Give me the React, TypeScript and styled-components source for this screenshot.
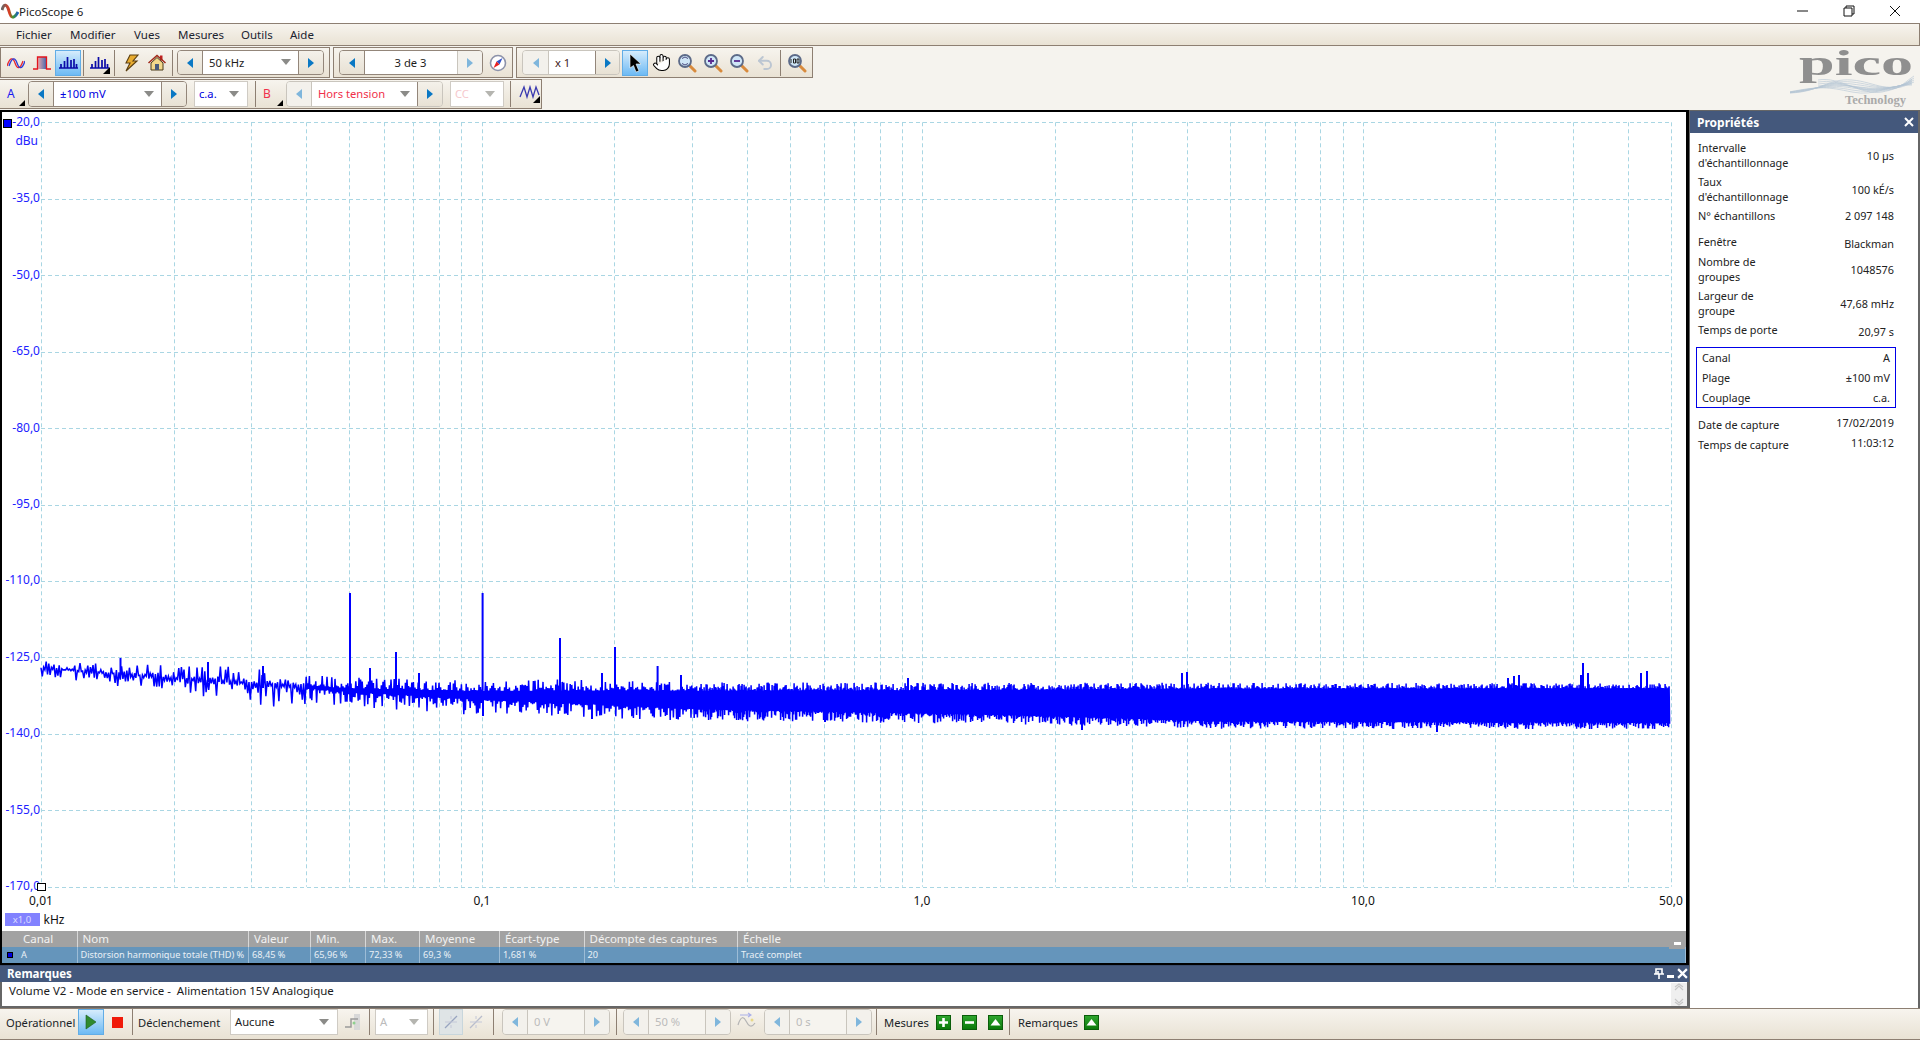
import React from "react";
import styled, { createGlobalStyle } from "styled-components";
import { Hand, Undo2 } from "lucide-react";

const Global = createGlobalStyle`
  html, body { margin: 0; padding: 0; width: 1920px; height: 1040px; overflow: hidden; background: #f5f3ee; }
  body { font-family: "Noto Sans", "Liberation Sans", sans-serif; font-size: 11px; color: #1c1c1c; }
  * { box-sizing: border-box; }
`;

const Page = styled.div`
  width: 1920px; height: 1040px; display: flex; flex-direction: column; background: #f5f3ee;
`;
const TitleBar = styled.div`
  height: 23px; background: #fff; display: flex; align-items: center; padding: 0 2px 0 1px; flex: none;
`;
const TitleText = styled.span`
  font-size: 11.5px; flex: 1; color: #222;
`;
const WinButton = styled.div`
  width: 46px; height: 23px; display: flex; align-items: center; justify-content: center; padding-bottom: 2px;
`;
const MenuBar = styled.div`
  height: 23px; flex: none; display: flex; align-items: center; padding-left: 16px;
  border: 1px solid #8d7f72; border-width: 1px 1px 1px 0;
  background-image: linear-gradient(180deg, #f7f4ee 0%, #e9e2d4 100%);
`;
const MenuItem = styled.span<{ $w: number }>`
  width: ${p => p.$w}px; font-size: 11.5px; color: #1b2330;
`;
const ToolArea = styled.div`
  height: 64px; flex: none; display: flex; justify-content: space-between; background: #f5f3ee;
`;
const ToolRows = styled.div`
  display: flex; flex-direction: column; padding-top: 1px; gap: 1px;
`;
const ToolRow = styled.div`
  display: flex; gap: 3px;
`;
const Group = styled.div<{ $w: number; $h: number }>`
  width: ${p => p.$w}px; height: ${p => p.$h}px; flex: none; display: flex; align-items: center;
  border: 1px solid #8d7f72; border-left-width: ${p => (p.$w > 400 ? 0 : 1)}px;
  background: linear-gradient(180deg, #f7f4ee 0%, #e9e2d4 100%);
`;
const ToolBtn = styled.div<{ $on?: boolean; $ml?: number }>`
  width: 26px; height: 26px; flex: none; display: flex; align-items: center; justify-content: center;
  margin-left: ${p => p.$ml ?? 0}px;
  ${p => p.$on ? `border: 1px solid #62ade6; background: linear-gradient(180deg, #d6ecfc 0%, #6dbaf4 100%);` : ""}
`;
const Sep = styled.div<{ $m?: number; $h?: number }>`
  width: 1px; height: ${p => p.$h ?? 26}px; background: #8d7f72; flex: none; margin: 0 ${p => p.$m ?? 2}px;
`;
const Stepper = styled.div<{ $w: number; $h?: number; $ml?: number; $off?: boolean }>`
  width: ${p => p.$w}px; height: ${p => p.$h ?? 25}px; margin-left: ${p => p.$ml ?? 0}px; flex: none;
  display: flex; border: 1px solid ${p => (p.$off ? "#c9c5bd" : "#93867a")}; border-radius: 4px; overflow: hidden;
`;
const StepCell = styled.div<{ $w?: number; $off?: boolean }>`
  width: ${p => p.$w ?? 25}px; flex: none; display: flex; align-items: center; justify-content: center;
  background: ${p => (p.$off ? "#f3f1ec" : "linear-gradient(180deg, #f4f1ea, #e8e1d4)")};
  border-left: 1px solid ${p => (p.$off ? "#c9c5bd" : "#93867a")};
  &:first-child { border-left: 0; border-right: 1px solid ${p => (p.$off ? "#c9c5bd" : "#93867a")}; }
`;
const Arrow = styled.span<{ $dir: "l" | "r"; $off?: boolean }>`
  width: 0; height: 0; border-top: 5.5px solid transparent; border-bottom: 5.5px solid transparent;
  ${p => (p.$dir === "l" ? "border-right" : "border-left")}: 6px solid ${p => (p.$off ? "#7fb6dc" : "#0a78c4")};
`;
const Field = styled.div<{ $color?: string; $center?: boolean; $off?: boolean }>`
  flex: 1; min-width: 0; display: flex; align-items: center; padding: 0 7px 1px 6px;
  background: ${p => (p.$off ? "#f6f4ef" : "#fff")}; color: ${p => p.$color ?? "#1c1c1c"}; font-size: 11.2px;
  justify-content: ${p => (p.$center ? "center" : "space-between")};
`;
const Caret = styled.span<{ $faint?: boolean }>`
  width: 0; height: 0; border-left: 5px solid transparent; border-right: 5px solid transparent;
  border-top: 6px solid ${p => (p.$faint ? "#b5b5b0" : "#8b8b88")};
`;
const SelectBox = styled.div<{ $w: number; $ml?: number; $color?: string; $h?: number }>`
  width: ${p => p.$w}px; height: ${p => p.$h ?? 26}px; margin-left: ${p => p.$ml ?? 0}px; flex: none;
  background: #fff; border: 1px solid #cfcbc4; color: ${p => p.$color ?? "#1c1c1c"};
  display: flex; align-items: center; justify-content: space-between; padding: 0 8px 1px 4px; font-size: 11.2px;
`;
const ChannelTag = styled.div<{ $color: string; $w: number; $pl: number }>`
  width: ${p => p.$w}px; flex: none; height: 26px; color: ${p => p.$color};
  display: flex; align-items: center; justify-content: space-between; font-size: 12px; padding: 0 0 1px ${p => p.$pl}px;
`;
const CornerMark = styled.span`
  width: 0; height: 0; border-left: 6px solid transparent; border-bottom: 6px solid #000; align-self: flex-end; margin-bottom: 0; margin-right: 3px;
`;
const LogoBox = styled.div`
  width: 130px; flex: none; height: 64px;
  svg { overflow: visible; display: block; }
`;
const Main = styled.div`
  flex: none; height: 898px; display: flex; background: #666;
`;
const LeftCol = styled.div`
  width: 1689px; flex: none; display: flex; flex-direction: column; border-top: 2px solid #000; border-bottom: 2px solid #666; background: #000;
`;
const ChartFrame = styled.div`
  height: 819px; flex: none; margin: 0 3px 0 2px; background: #fff; display: flex;
`;
const AxisY = styled.text`
  font-family: "Noto Sans", sans-serif; font-size: 12px; fill: #2222ff; text-anchor: end;
`;
const AxisX = styled.text`
  font-family: "Noto Sans", sans-serif; font-size: 12px; fill: #111; text-anchor: middle;
`;
const Scale = styled.text`
  font-family: "Noto Sans", sans-serif; font-size: 9.5px; fill: #dcdcff; text-anchor: middle;
`;
const MeasureWrap = styled.div`
  flex: none; margin: 0 3px 0 2px; position: relative;
`;
const Cols = "75.5px 171.5px 62px 55px 54px 80px 84.5px 153.5px 1fr";
const HeadRow = styled.div`
  height: 16px; display: grid; grid-template-columns: ${Cols}; background: #a2a2a2; color: #f2f2f2; font-size: 11.5px; line-height: 15px;
`;
const BodyRow = styled.div`
  height: 16px; display: grid; grid-template-columns: ${Cols}; background: #6595bb; color: #e9f0f6; font-size: 9.2px; line-height: 16px;
`;
const HeadCell = styled.div<{ $pl?: number }>`
  padding-left: ${p => p.$pl ?? 5}px; border-right: 1px solid #d8d8d8; white-space: nowrap; overflow: hidden;
  &:last-child { border-right: 0; }
`;
const BodyCell = styled.div<{ $pl?: number }>`
  padding-left: ${p => p.$pl ?? 3}px; border-right: 1px solid #9cbcd6; white-space: nowrap; overflow: hidden; display: flex; align-items: center;
  &:last-child { border-right: 0; }
`;
const RowMark = styled.span`
  width: 6px; height: 6px; background: #0000e0; border: 1px solid #000; flex: none; margin-left: 3px; margin-right: 8px;
`;
const Collapse = styled.div`
  position: absolute; right: 1px; top: 9px; width: 16px; height: 9px; background: #a2a2a2; display: flex; justify-content: center; padding-top: 2px;
`;
const CollapseDash = styled.span`
  width: 7px; height: 3px; background: #fff;
`;
const NotesHead = styled.div`
  height: 17px; margin-top: 2px; flex: none; background: #44587c; border-top: 1px solid #3a4c6c; color: #fff; font-weight: 700; font-size: 11.5px;
  display: flex; align-items: center; justify-content: space-between; padding: 0 0 1px 7px;
`;
const NotesBody = styled.div`
  height: 24px; flex: none; background: #fff; border-left: 2px solid #666; border-right: 2px solid #666; display: flex; justify-content: space-between; font-size: 11.5px; padding-left: 7px; line-height: 18px; color: #1c1c1c; white-space: pre;
`;
const Scroller = styled.div`
  width: 16px; flex: none; margin-top: 1px; background: #efefef; display: flex; flex-direction: column; align-items: center; justify-content: space-between;
`;
const PanelIcons = styled.div`
  display: flex; align-items: center; gap: 2px; margin-right: 1px;
`;
const Panel = styled.div`
  width: 229px; flex: none; margin-top: 1px; margin-right: 2px; display: flex; flex-direction: column; background: #fff; border-left: 1px solid #666;
`;
const PanelHead = styled.div`
  height: 22px; flex: none; background: #44587c; color: #fff; font-weight: 700; font-size: 12px;
  display: flex; align-items: center; justify-content: space-between; padding: 0 4px 0 7px;
`;
const PanelBody = styled.div`
  flex: 1; padding-top: 7px; background: #fff; font-size: 10.85px; color: #222; display: flex; flex-direction: column;
`;
const PropRow = styled.div<{ $mt?: number }>`
  display: flex; justify-content: space-between; align-items: center; padding: 0 24px 0 8px; line-height: 15px; margin-top: ${p => p.$mt ?? 0}px;
`;
const PropLabel = styled.div`
  white-space: pre-line;
`;
const PropValue = styled.div<{ $shift?: number }>`
  margin-top: ${p => p.$shift ?? 0}px; margin-bottom: ${p => -(p.$shift ?? 0)}px;
`;
const BlueBox = styled.div`
  margin: 10px 22px 0 6px; height: 61px; border: 1px solid #0000e8; display: flex; flex-direction: column; justify-content: center;
`;
const BoxRow = styled.div`
  height: 20px; display: flex; align-items: center; justify-content: space-between; padding: 0 5px 0 5px;
`;
const BottomBar = styled.div`
  flex: 1; display: flex; align-items: center; padding: 0 0 4px 6px; font-size: 11.2px;
  border-top: 1px solid #8d7f72; border-bottom: 1px solid #8d7f72; background: linear-gradient(180deg, #f7f4ee 0%, #e9e2d4 100%);
`;
const BarLabel = styled.span<{ $ml?: number; $w?: number }>`
  margin-left: ${p => p.$ml ?? 0}px; width: ${p => (p.$w ? p.$w + "px" : "auto")}; flex: none; white-space: nowrap; color: #1a1f28;
`;
const Green = styled.div<{ $ml?: number }>`
  width: 15px; height: 15px; flex: none; margin-left: ${p => p.$ml ?? 0}px; border: 1px solid #0a5d0a;
  background: linear-gradient(180deg, #2ea52e, #0b7a0b); display: flex; align-items: center; justify-content: center;
`;
const StopMark = styled.span`
  width: 11px; height: 11px; background: #f01a0a; margin-left: 8px; flex: none;
`;
const HiliteBtn = styled.div<{ $on?: boolean; $ml?: number }>`
  width: 24px; height: 26px; flex: none; margin-left: ${p => p.$ml ?? 0}px; display: flex; align-items: center; justify-content: center;
  ${p => p.$on ? "background: #dfe4e6; border: 1px solid #c8d6dc;" : ""}
`;

/* ---------- icons ---------- */
const AppIcon = () => (
  <svg width="18" height="18" viewBox="0 0 18 18">
    <defs>
      <linearGradient id="ai" x1="0" x2="1"><stop offset="0" stopColor="#666" /><stop offset=".45" stopColor="#e03a20" /><stop offset=".7" stopColor="#3a9a30" /><stop offset="1" stopColor="#1c5cc0" /></linearGradient>
    </defs>
    <path d="M1 7 C3 0 6 1 8 8 C10 16 13 16 17 9" fill="none" stroke="url(#ai)" strokeWidth="3" />
  </svg>
);
const SineIcon = () => (
  <svg width="18" height="14" viewBox="0 0 18 14">
    <path d="M0 10 C3 1 6 1 8 7 S13 14 16 5" fill="none" stroke="#e8242c" strokeWidth="1.300" />
    <path d="M2 10 C5 1 8 1 10 7 S15 14 18 5" fill="none" stroke="#2a3cd8" strokeWidth="1.300" />
  </svg>
);
const SquareIcon = () => (
  <svg width="18" height="14" viewBox="0 0 18 14">
    <defs><linearGradient id="sq" x1="0" x2="1"><stop offset="0" stopColor="#e9a3a8" /><stop offset="1" stopColor="#4a6cb0" /></linearGradient></defs>
    <rect x="5" y="1" width="8" height="12" fill="url(#sq)" />
    <path d="M0 13 H4.500 V1 H13.500 V13 H18" fill="none" stroke="#e2141c" strokeWidth="1.300" />
  </svg>
);
const BarsIcon = ({ corner }: { corner?: boolean }) => (
  <svg width="22" height="22" viewBox="0 0 22 22">
    <path d="M2 16 H21 M4 16 V12 M7.500 16 V9 M10.500 16 V5 M14 16 V8 M17 16 V7 M19.500 16 V12" fill="none" stroke="#0a0aa8" strokeWidth="1.700" />
    {corner && <path d="M22 15 V22 H15 Z" fill="#000" />}
  </svg>
);
const BoltIcon = () => (
  <svg width="20" height="20" viewBox="0 0 20 20">
    <path d="M9 2 H17 L12 8 H16 L5 18 L9 10 H5 Z" fill="#e8ac30" stroke="#5a3e10" strokeWidth="1.100" />
  </svg>
);
const HomeIcon = () => (
  <svg width="20" height="20" viewBox="0 0 20 20">
    <rect x="13" y="2.500" width="2.500" height="5" fill="#c02020" />
    <path d="M1.500 10 L10 2.500 L18.500 10" fill="none" stroke="#a02a1a" strokeWidth="1.600" />
    <path d="M4 10 L10 4.500 L16 10 V17 H4 Z" fill="#f2d88c" stroke="#4a3a18" strokeWidth="1" />
    <rect x="8" y="11" width="4" height="6" fill="#4a5a7a" />
  </svg>
);
const CompassIcon = () => (
  <svg width="18" height="18" viewBox="0 0 18 18">
    <circle cx="9" cy="9" r="7.500" fill="#fff" stroke="#8d93aa" strokeWidth="1.600" />
    <path d="M13.500 4 L10.500 10.500 L7.500 7.500 Z" fill="#3050c8" />
    <path d="M4.500 14 L7.500 7.500 L10.500 10.500 Z" fill="#e82020" />
  </svg>
);
const CursorIcon = () => (
  <svg width="18" height="20" viewBox="0 0 18 20">
    <path d="M4 1 L15 11 L10 11 L13 18 L10 19 L7.500 12.500 L4 15 Z" fill="#000" stroke="#fff" strokeWidth=".6" />
  </svg>
);
const Lens = ({ kind }: { kind: "fit" | "in" | "out" | "100" }) => (
  <svg width="20" height="20" viewBox="0 0 20 20">
    <path d="M12 12 L18 18" stroke="#d88a3c" strokeWidth="3" strokeLinecap="round" />
    <circle cx="8" cy="8" r="6" fill="#cfe6f7" stroke="#5c6a88" strokeWidth="1.800" />
    {kind === "in" && <path d="M5 8 H11 M8 5 V11" stroke="#5a2a90" strokeWidth="1.800" />}
    {kind === "out" && <path d="M5 8 H11" stroke="#5a2a90" strokeWidth="1.800" />}
    {kind === "fit" && <path d="M5 5.500 L8 4 L11 5.500 M5 10.500 L8 12 L11 10.500" fill="none" stroke="#4a4a80" strokeWidth="1" />}
    {kind === "100" && <path d="M4 6 V10 M6.500 6 H8.500 V10 H6.500 Z M10 6 H12 V10 H10 Z" fill="none" stroke="#222" strokeWidth="1" />}
  </svg>
);
const WaveCorner = () => (
  <svg width="22" height="20" viewBox="0 0 22 20">
    <path d="M1 13 L5 3 L8 13 L11 3 L14 13 L17 3 L20 11" fill="none" stroke="#3a3ab0" strokeWidth="1.300" />
    <path d="M21 12 V19 H14 Z" fill="#000" />
  </svg>
);
const TriggerType = () => (
  <svg width="20" height="20" viewBox="0 0 20 20">
    <rect x="11" y="2" width="6" height="16" fill="#d8d8d8" />
    <path d="M2 15 H8 V7 H15" fill="none" stroke="#9a9a9a" strokeWidth="1.500" />
    <circle cx="11" cy="11" r="1.500" fill="#8fd08f" />
  </svg>
);
const Cross = ({ faint }: { faint?: boolean }) => (
  <svg width="16" height="16" viewBox="0 0 16 16">
    <path d="M2 14 L14 2" stroke={faint ? "#b8bccc" : "#98a4c0"} strokeWidth="1.300" />
    <path d="M2 8 H14 M8 2 V5 M8 11 V14" stroke="#c4c8d8" strokeWidth="1" />
  </svg>
);
const EdgeIcon = () => (
  <svg width="20" height="20" viewBox="0 0 20 20">
    <path d="M1 13 C4 3 7 5 9 9 S14 17 18 11" fill="none" stroke="#b4b4b4" strokeWidth="1.200" />
    <path d="M3 3 H14 M11 1 L14 3 L11 5" fill="none" stroke="#aab0e8" strokeWidth="1.100" />
    <circle cx="15" cy="8" r="1.500" fill="#e8d888" />
  </svg>
);
const Play = () => (
  <svg width="12" height="16" viewBox="0 0 12 16"><path d="M1 1 L11 8 L1 15 Z" fill="#2f8a2f" stroke="#1d5d1d" strokeWidth=".6" /></svg>
);
const MiniGlyph = ({ kind }: { kind: "plus" | "minus" | "up" }) => (
  <svg width="11" height="11" viewBox="0 0 11 11">
    {kind === "plus" && <path d="M5.500 1 V10 M1 5.500 H10" stroke="#fff" strokeWidth="2.600" />}
    {kind === "minus" && <path d="M1 5.500 H10" stroke="#fff" strokeWidth="2.600" />}
    {kind === "up" && <path d="M5.500 2 L10.500 8.500 H.5 Z" fill="#fff" />}
  </svg>
);
const CloseX = ({ s = 10 }: { s?: number }) => (
  <svg width={s} height={s} viewBox="0 0 10 10"><path d="M1 1 L9 9 M9 1 L1 9" stroke="#fff" strokeWidth="2" /></svg>
);
const PinIcon = () => (
  <svg width="10" height="11" viewBox="0 0 10 11"><path d="M2 1 H8 V6 H2 Z M0 6 H10 M5 6 V11 M4 3 V6" fill="none" stroke="#fff" strokeWidth="1.600" /></svg>
);
const MinIcon = () => (
  <svg width="9" height="11" viewBox="0 0 9 11"><rect x="1" y="7" width="7" height="3" fill="#fff" /></svg>
);
const Chevron = ({ up }: { up?: boolean }) => (
  <svg width="10" height="9" viewBox="0 0 10 9"><path d={up ? "M1 7 L5 3 L9 7 M1 4 L5 1 L9 4" : "M1 2 L5 6 L9 2 M1 5 L5 8 L9 5"} fill="none" stroke="#c6c6c6" strokeWidth="1.200" /></svg>
);
const PicoLogo = () => (
  <svg width="130" height="64" viewBox="0 0 130 64">
    <text x="9" y="29" fontFamily="Liberation Serif, serif" fontWeight="700" fontSize="36" fill="#8f8f8f" textLength="114" lengthAdjust="spacingAndGlyphs">pico</text>
    <g fill="none" stroke="#b4c4d4" strokeWidth=".6">
      {[0, 1, 2, 3, 4, 5, 6].map(i => (
        <path key={i} d={`M0 ${47 - i * 0.2} C30 ${46 - i} 38 ${32 + i * 1.500} 62 ${34 + i * 2} S100 ${50 - i * 2} 122 ${33 + i}`} />
      ))}
      {[0, 1, 2, 3].map(i => (
        <path key={i} d={`M28 ${34 + i * 2} C50 ${30 + i * 2} 72 ${50 - i * 2} 92 ${46 - i} S112 ${38 + i} 124 ${30 + i * 2}`} />
      ))}
    </g>
    <text x="55" y="58" fontFamily="Liberation Serif, serif" fontWeight="700" fontSize="12" fill="#aaa" textLength="61" lengthAdjust="spacingAndGlyphs">Technology</text>
  </svg>
);

/* ---------- chart ---------- */
const X0 = 41, DEC = 440.6, Y0 = 122.3, DY = 76.44;
const xOf = (f: number) => X0 + DEC * Math.log10(f / 0.01);
const freqs: number[] = [];
for (const d of [0.01, 0.1, 1]) for (let i = 1; i <= 9; i++) freqs.push(d * i);
[10, 20, 30, 40, 50].forEach(f => freqs.push(f));
const yTicks = Array.from({ length: 11 }, (_, i) => -20 - 15 * i);

function rngOf(seed: number) {
  return () => {
    seed |= 0; seed = (seed + 0x6d2b79f5) | 0;
    let t = Math.imul(seed ^ (seed >>> 15), 1 | seed);
    t = (t + Math.imul(t ^ (t >>> 7), 61 | t)) ^ t;
    return ((t ^ (t >>> 14)) >>> 0) / 4294967296;
  };
}
const lerp = (tab: number[][], x: number) => {
  for (let i = 1; i < tab.length; i++) {
    if (x <= tab[i][0]) {
      const [a, b] = [tab[i - 1], tab[i]];
      return a[1] + ((b[1] - a[1]) * (x - a[0])) / (b[0] - a[0]);
    }
  }
  return tab[tab.length - 1][1];
};
const centre = [[41, 668], [174, 678], [306, 687], [350, 690], [482, 695], [615, 697], [700, 699], [1000, 701], [1220, 703], [1670, 703.5]];
const half = [[41, 4], [174, 8], [306, 12], [350, 13], [482, 16], [615, 17], [700, 17], [1000, 18], [1220, 20], [1670, 20]];
const floorTab = [[41, 0], [306, 0.1], [500, 0.3], [700, 0.55], [1000, 0.7], [1220, 0.82], [1670, 0.87]];

function buildTrace() {
  const r = rngOf(20190217);
  let d = `M41 668`;
  let up = true;
  let x = 41;
  while (x < 1670) {
    const c = lerp(centre, x), h = lerp(half, x), fl = lerp(floorTab, x);
    const u = r();
    const m = fl + (1.15 - fl) * u * u * (x < 306 ? 1.6 : 1);
    const y = c + (up ? -0.88 : 1.12) * h * m;
    d += `L${x.toFixed(1)} ${y.toFixed(1)}`;
    up = !up;
    x += x < 306 ? 1.3 : x < 700 ? 0.8 : 0.5;
  }
  return d;
}
const spikes: [number, number, number][] = [
  [350, 593, 690], [482.6, 593, 695], [560, 638, 695], [615, 647, 695], [396, 652, 692], [657.6, 666, 695],
  [120.5, 658, 675], [208, 662, 682], [263, 666, 688], [370, 668, 692], [419, 673, 695], [602, 673, 695], [681, 675, 698],
  [908, 678, 695], [1182, 673, 695], [1187, 672, 695], [1583, 663, 695], [1581, 675, 695], [1647, 671, 695], [1641, 673, 695],
  [1588, 673, 695], [1519, 675, 695], [1514, 676, 695], [1508, 678, 695],
  [1082, 705, 730], [1437, 705, 732], [825, 705, 722], [483, 700, 716], [592, 700, 719],
];
const trace = buildTrace();
const spikePath = spikes.map(([x, a, b]) => `M${x} ${a}V${b}`).join("");

const Chart = () => (
  <svg width="1684" height="819" viewBox="2 112 1684 819">
    <g stroke="#a9d6e3" strokeWidth="1" strokeDasharray="4 3" fill="none">
      {freqs.map(f => { const x = Math.round(xOf(f)) + 0.5; return <path key={f} d={`M${x} ${Y0}V${Y0 + 10 * DY}`} />; })}
      {yTicks.map((_, i) => { const y = Math.round(Y0 + i * DY) + 0.5; return <path key={i} d={`M${X0} ${y}H1671`} />; })}
    </g>
    <path d={trace} fill="none" stroke="#0000ff" strokeWidth="1.500" />
    <path d={spikePath} fill="none" stroke="#0000ff" strokeWidth="2" />
    {yTicks.map((v, i) => (
      <AxisY key={v} x="40" y={Y0 + i * DY + 3.5}>{`${v},0`}</AxisY>
    ))}
    <AxisY x="38" y="145">dBu</AxisY>
    <rect x="3.500" y="119.500" width="8" height="8" fill="#0000ff" stroke="#000" />
    <rect x="37.500" y="883.500" width="8" height="7" fill="#fff" stroke="#000" />
    <AxisX x="41" y="905">0,01</AxisX>
    <AxisX x="482" y="905">0,1</AxisX>
    <AxisX x="922" y="905">1,0</AxisX>
    <AxisX x="1363" y="905">10,0</AxisX>
    <AxisX x="1671" y="905">50,0</AxisX>
    <rect x="5" y="913" width="35" height="13" fill="#8282ff" />
    <Scale x="22" y="923">x1,0</Scale>
    <AxisX x="54" y="923.500">kHz</AxisX>
  </svg>
);

const heads = ["Canal", "Nom", "Valeur", "Min.", "Max.", "Moyenne", "Écart-type", "Décompte des captures", "Échelle"];
const cells = ["Distorsion harmonique totale (THD) %", "68,45 %", "65,96 %", "72,33 %", "69,3 %", "1,681 %", "20", "Tracé complet"];

export default function App() {
  return (
    <Page>
      <Global />
      <TitleBar>
        <AppIcon />
        <TitleText>PicoScope 6</TitleText>
        <WinButton><svg width="12" height="2" viewBox="0 0 12 2"><path d="M0 1 H11" stroke="#111" strokeWidth="1" /></svg></WinButton>
        <WinButton><svg width="12" height="12" viewBox="0 0 12 12"><path d="M3 3 V1 H11 V9 H9 M1 3 H9 V11 H1 Z" fill="none" stroke="#111" /></svg></WinButton>
        <WinButton><svg width="12" height="12" viewBox="0 0 12 12"><path d="M1 1 L11 11 M11 1 L1 11" stroke="#111" /></svg></WinButton>
      </TitleBar>
      <MenuBar>
        <MenuItem $w={54}>Fichier</MenuItem>
        <MenuItem $w={64}>Modifier</MenuItem>
        <MenuItem $w={44}>Vues</MenuItem>
        <MenuItem $w={63}>Mesures</MenuItem>
        <MenuItem $w={49}>Outils</MenuItem>
        <MenuItem $w={40}>Aide</MenuItem>
      </MenuBar>
      <ToolArea>
        <ToolRows>
          <ToolRow>
            <Group $w={330} $h={31}>
              <ToolBtn $ml={2}><SineIcon /></ToolBtn>
              <ToolBtn><SquareIcon /></ToolBtn>
              <ToolBtn $on><BarsIcon /></ToolBtn>
              <Sep />
              <ToolBtn><BarsIcon corner /></ToolBtn>
              <Sep />
              <ToolBtn $ml={1}><BoltIcon /></ToolBtn>
              <ToolBtn><HomeIcon /></ToolBtn>
              <Sep />
              <Stepper $w={147} $ml={2}>
                <StepCell><Arrow $dir="l" /></StepCell>
                <Field>50 kHz<Caret /></Field>
                <StepCell><Arrow $dir="r" /></StepCell>
              </Stepper>
            </Group>
            <Group $w={180} $h={31}>
              <Stepper $w={144} $ml={5}>
                <StepCell><Arrow $dir="l" /></StepCell>
                <Field $center>3 de 3</Field>
                <StepCell $off><Arrow $dir="r" $off /></StepCell>
              </Stepper>
              <ToolBtn $ml={2}><CompassIcon /></ToolBtn>
            </Group>
            <Group $w={297} $h={31}>
              <Stepper $w={98} $ml={5} $off>
                <StepCell $off $w={26}><Arrow $dir="l" $off /></StepCell>
                <Field $color="#402020">x 1</Field>
                <StepCell $w={24}><Arrow $dir="r" /></StepCell>
              </Stepper>
              <ToolBtn $on $ml={2}><CursorIcon /></ToolBtn>
              <ToolBtn><Hand size={19} color="#000" fill="#fff" strokeWidth={1.3} /></ToolBtn>
              <ToolBtn><Lens kind="fit" /></ToolBtn>
              <ToolBtn><Lens kind="in" /></ToolBtn>
              <ToolBtn><Lens kind="out" /></ToolBtn>
              <ToolBtn><Undo2 size={18} color="#bcc6d2" strokeWidth={2.6} /></ToolBtn>
              <Sep />
              <ToolBtn $ml={1}><Lens kind="100" /></ToolBtn>
            </Group>
          </ToolRow>
          <ToolRow>
            <Group $w={542} $h={30}>
              <ChannelTag $color="#1a1af0" $w={28} $pl={7}>A<CornerMark /></ChannelTag>
              <Stepper $w={159} $h={26}>
                <StepCell><Arrow $dir="l" /></StepCell>
                <Field $color="#0000e0">±100 mV<Caret /></Field>
                <StepCell><Arrow $dir="r" /></StepCell>
              </Stepper>
              <SelectBox $w={54} $ml={7} $color="#0000e0">c.a.<Caret /></SelectBox>
              <Sep $m={7} />
              <ChannelTag $color="#f0304a" $w={23} $pl={0}>B<CornerMark /></ChannelTag>
              <Stepper $w={157} $h={26} $off>
                <StepCell $off><Arrow $dir="l" $off /></StepCell>
                <Field $color="#f0304a">Hors tension<Caret /></Field>
                <StepCell><Arrow $dir="r" /></StepCell>
              </Stepper>
              <SelectBox $w={54} $ml={7} $color="#f6c8cc">CC<Caret $faint /></SelectBox>
              <Sep $m={6} />
              <ToolBtn><WaveCorner /></ToolBtn>
            </Group>
          </ToolRow>
        </ToolRows>
        <LogoBox><PicoLogo /></LogoBox>
      </ToolArea>
      <Main>
        <LeftCol>
          <ChartFrame><Chart /></ChartFrame>
          <MeasureWrap>
            <HeadRow>
              {heads.map((h, i) => <HeadCell key={h} $pl={i === 0 ? 21 : 5}>{h}</HeadCell>)}
            </HeadRow>
            <BodyRow>
              <BodyCell $pl={2}><RowMark />A</BodyCell>
              {cells.map(c => <BodyCell key={c}>{c}</BodyCell>)}
              <BodyCell />
            </BodyRow>
            <Collapse><CollapseDash /></Collapse>
          </MeasureWrap>
          <NotesHead>
            Remarques
            <PanelIcons><PinIcon /><MinIcon /><CloseX s={11} /></PanelIcons>
          </NotesHead>
          <NotesBody>
            {"Volume V2 - Mode en service -  Alimentation 15V Analogique"}
            <Scroller><Chevron up /><Chevron /></Scroller>
          </NotesBody>
        </LeftCol>
        <Panel>
          <PanelHead>Propriétés<CloseX /></PanelHead>
          <PanelBody>
            <PropRow><PropLabel>{"Intervalle\nd'échantillonnage"}</PropLabel><PropValue>10 µs</PropValue></PropRow>
            <PropRow $mt={4}><PropLabel>{"Taux\nd'échantillonnage"}</PropLabel><PropValue>100 kÉ/s</PropValue></PropRow>
            <PropRow $mt={4}><PropLabel>N° échantillons</PropLabel><PropValue>2 097 148</PropValue></PropRow>
            <PropRow $mt={11}><PropLabel>Fenêtre</PropLabel><PropValue $shift={2}>Blackman</PropValue></PropRow>
            <PropRow $mt={5}><PropLabel>{"Nombre de\ngroupes"}</PropLabel><PropValue>1048576</PropValue></PropRow>
            <PropRow $mt={4}><PropLabel>{"Largeur de\ngroupe"}</PropLabel><PropValue>47,68 mHz</PropValue></PropRow>
            <PropRow $mt={4}><PropLabel>Temps de porte</PropLabel><PropValue $shift={2}>20,97 s</PropValue></PropRow>
            <BlueBox>
              <BoxRow><span>Canal</span><span>A</span></BoxRow>
              <BoxRow><span>Plage</span><span>±100 mV</span></BoxRow>
              <BoxRow><span>Couplage</span><span>c.a.</span></BoxRow>
            </BlueBox>
            <PropRow $mt={9}><PropLabel>Date de capture</PropLabel><PropValue $shift={-2}>17/02/2019</PropValue></PropRow>
            <PropRow $mt={5}><PropLabel>Temps de capture</PropLabel><PropValue $shift={-2}>11:03:12</PropValue></PropRow>
          </PanelBody>
        </Panel>
      </Main>
      <BottomBar>
        <BarLabel $w={72}>Opérationnel</BarLabel>
        <ToolBtn $on><Play /></ToolBtn>
        <StopMark />
        <Sep $m={9} />
        <BarLabel $ml={-4} $w={92}>Déclenchement</BarLabel>
        <SelectBox $w={108}>Aucune<Caret /></SelectBox>
        <ToolBtn $ml={2}><TriggerType /></ToolBtn>
        <Sep $m={3} />
        <SelectBox $w={53} $ml={2} $color="#bbb">A<Caret $faint /></SelectBox>
        <Sep $m={5} />
        <HiliteBtn $on><Cross /></HiliteBtn>
        <HiliteBtn $ml={1}><Cross faint /></HiliteBtn>
        <Sep $m={5} />
        <Stepper $w={108} $h={26} $off $ml={3}>
          <StepCell $off><Arrow $dir="l" $off /></StepCell>
          <Field $off $color="#bbb">0 V</Field>
          <StepCell $off><Arrow $dir="r" $off /></StepCell>
        </Stepper>
        <Sep $m={6} />
        <Stepper $w={108} $h={26} $off>
          <StepCell $off><Arrow $dir="l" $off /></StepCell>
          <Field $off $color="#bbb">50 %</Field>
          <StepCell $off><Arrow $dir="r" $off /></StepCell>
        </Stepper>
        <ToolBtn $ml={3}><EdgeIcon /></ToolBtn>
        <Stepper $w={108} $h={26} $off $ml={4}>
          <StepCell $off><Arrow $dir="l" $off /></StepCell>
          <Field $off $color="#bbb">0 s</Field>
          <StepCell $off><Arrow $dir="r" $off /></StepCell>
        </Stepper>
        <Sep $m={4} />
        <BarLabel $ml={3} $w={52}>Mesures</BarLabel>
        <Green><MiniGlyph kind="plus" /></Green>
        <Green $ml={11}><MiniGlyph kind="minus" /></Green>
        <Green $ml={11}><MiniGlyph kind="up" /></Green>
        <Sep $m={6} />
        <BarLabel $ml={2} $w={66}>Remarques</BarLabel>
        <Green><MiniGlyph kind="up" /></Green>
      </BottomBar>
    </Page>
  );
}
